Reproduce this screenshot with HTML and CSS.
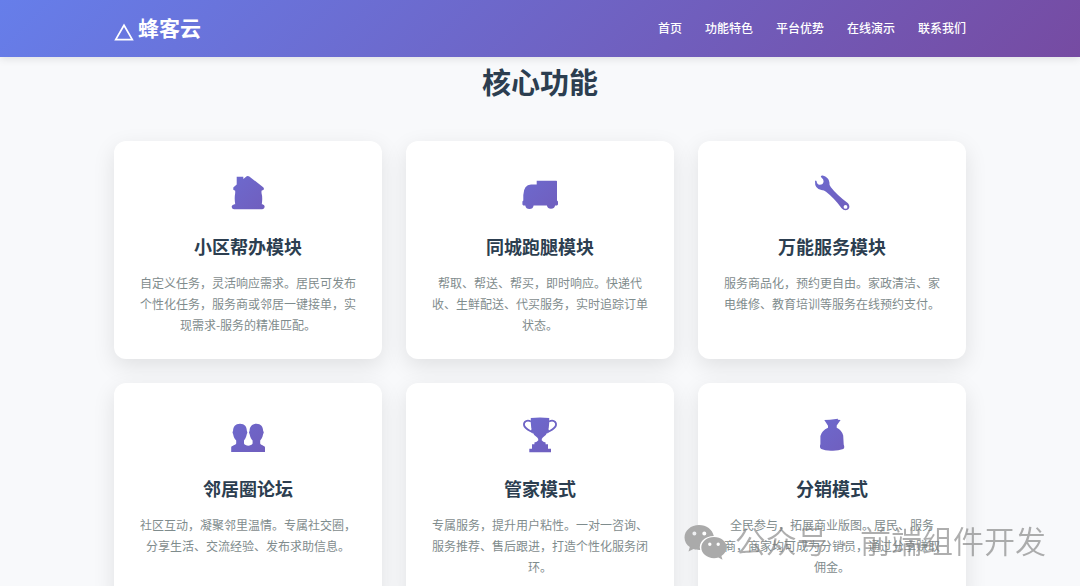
FILE: index.html
```html
<!DOCTYPE html>
<html lang="zh-CN">
<head>
  <meta charset="UTF-8" />
  <meta name="viewport" content="width=device-width, initial-scale=1" />
  <title>蜂客云</title>
  <link rel="stylesheet" href="styles.css">
</head>
<body>
  <svg class="defs" width="0" height="0" aria-hidden="true">
    <defs>
      <linearGradient id="iconFill" gradientUnits="userSpaceOnUse" x1="0" y1="0" x2="40" y2="40">
        <stop offset="0" stop-color="#6d6bd0" />
        <stop offset="1" stop-color="#705dbc" />
      </linearGradient>
    </defs>
  </svg>

  <header class="header">
    <div class="container header-inner">
      <a class="logo" href="#">
        <svg class="logo-icon" viewBox="0 0 20 18" aria-hidden="true"><path d="M10 2.3L18.3 16.6H1.7Z" /></svg>
        <span>蜂客云</span>
      </a>
      <nav class="nav">
        <a href="#home">首页</a>
        <a href="#features">功能特色</a>
        <a href="#advantages">平台优势</a>
        <a href="#demo">在线演示</a>
        <a href="#contact">联系我们</a>
      </nav>
    </div>
  </header>

  <main>
    <section class="features" id="features">
      <div class="container">
        <h2 class="section-title">核心功能</h2>
        <div class="feature-grid">
          <article class="feature-card">
            <div class="feature-icon">
              <svg viewBox="0 0 40 40" aria-hidden="true"><path d="M8.7 3.7H15.3V6L18.7 3.3Q20 2.5 21.3 3.5L35.2 14.2Q36.4 15.3 35.6 16.8L33.5 17.8V20Q34.8 24.5 33.8 31.2H34.5Q36.7 31.8 36.7 33.8Q36.5 36.2 34.3 36.2H6Q3.7 36.2 3.6 33.8Q3.7 31.8 6.4 31.2H7.2Q6.2 25.5 7.2 20V17.8L5.3 16.8V14.6L8.7 11.6Z" /></svg>
            </div>
            <h3>小区帮办模块</h3>
            <p>自定义任务，灵活响应需求。居民可发布个性化任务，服务商或邻居一键接单，实现需求-服务的精准匹配。</p>
          </article>
          <article class="feature-card">
            <div class="feature-icon">
              <svg viewBox="0 0 40 40" aria-hidden="true"><path d="M16.7 7.7H36.4L37 8.3V27.5L38 28.5V31.5L37 32.5H35.1A4.2 4.2 0 0 1 26.9 32.5H13.6A4.2 4.2 0 0 1 5.3 32.5H3.3L2.4 31.5V28.5L3.3 27.5V22Q3.8 11.4 11 11.4H16.7Z" /></svg>
            </div>
            <h3>同城跑腿模块</h3>
            <p>帮取、帮送、帮买，即时响应。快递代收、生鲜配送、代买服务，实时追踪订单状态。</p>
          </article>
          <article class="feature-card">
            <div class="feature-icon">
              <svg viewBox="0 0 40 40" aria-hidden="true"><path fill-rule="evenodd" d="M9 3Q9.6 2.2 10.8 2.5Q16.5 4 17.4 9.2Q17 12 18.9 14.2Q24.5 21.5 36 30.3Q38.8 34 36 36.5Q32.5 38.5 29.6 35.2Q22 25 14 18.8Q12.2 17.3 9.4 17Q2.6 15.7 3 8.2Q3.7 6.6 4.6 8.2Q5 11.5 7.5 11.7Q11.3 11.8 11.6 8.2Q11.6 6 9.4 4.5Q8.5 3.8 9 3ZM33.5 32A1.9 1.9 0 1 0 33.5 35.8A1.9 1.9 0 1 0 33.5 32Z" /></svg>
            </div>
            <h3>万能服务模块</h3>
            <p>服务商品化，预约更自由。家政清洁、家电维修、教育培训等服务在线预约支付。</p>
          </article>
          <article class="feature-card">
            <div class="feature-icon">
              <svg viewBox="0 0 40 40" aria-hidden="true"><path d="M12 8.7C16.8 8.7 18.8 12 18.8 15.5L19.4 17.5L18.7 19.5C18.2 22.5 16.8 24.5 16 25.5V28.5C16.5 30.3 18.5 30.2 20.3 30.8C22 30.2 24 30.3 24.6 28.5V25.5C23.5 24.5 22.2 22.5 21.7 19.5L21 17.5L21.6 15.5C21.7 12 23.8 8.7 28.4 8.7C33 8.7 35 12 35.1 15.5L35.8 17.5L35 19.5C34.7 22.5 33 24.5 32.2 25.5V28.5C33 30.5 37 30.5 37 32.5V37H3.2V32.5C3.2 30.5 7.2 30.5 8.2 28.5V25.5C7.2 24.5 5.6 22.5 5.2 19.5L4.5 17.5L5.1 15.5C5.2 12 7.2 8.7 12 8.7Z" /></svg>
            </div>
            <h3>邻居圈论坛</h3>
            <p>社区互动，凝聚邻里温情。专属社交圈，分享生活、交流经验、发布求助信息。</p>
          </article>
          <article class="feature-card">
            <div class="feature-icon">
              <svg viewBox="0 0 40 40" aria-hidden="true"><path d="M10.8 3Q20 1.8 29.2 3V8Q29 19.5 22.8 22.4Q21.5 23.5 21.7 25.3Q23 27.3 25.6 27.5V29.2H28V33.8H31V37.2H9.3V33.8H12V29.2H14.4V27.5Q17 27.3 18.3 25.3Q18.5 23.5 17.2 22.4Q11 19.5 10.8 8Z" /><path class="line" d="M11 6.5C7 4.5 3.5 6.5 4 10C4.5 13.5 8.5 15 12 17V14.5M29 6.5C33 4.5 36.5 6.5 36 10C35.5 13.5 31.5 15 28 17V14.5" /></svg>
            </div>
            <h3>管家模式</h3>
            <p>专属服务，提升用户粘性。一对一咨询、服务推荐、售后跟进，打造个性化服务闭环。</p>
          </article>
          <article class="feature-card">
            <div class="feature-icon">
              <svg viewBox="0 0 40 40" aria-hidden="true"><path d="M12.3 5L18 4.7L26 3.8L25.8 4.8L28.6 5L24.7 10.5V12.8Q29.5 14.8 31.2 20.5L31.7 29.5Q33 32.8 31.3 34Q26 36 20 35.8Q13 36 9.3 34Q7.2 32.8 8.4 29V21Q9.8 15.5 16 12.8V10.8Z" /></svg>
            </div>
            <h3>分销模式</h3>
            <p>全民参与，拓展商业版图。居民、服务商，商家均可成为分销员，通过分享赚取佣金。</p>
          </article>
        </div>
      </div>
    </section>
  </main>

  <div class="watermark">
    <svg class="watermark-icon" viewBox="0 0 44 36" aria-hidden="true">
      <path fill-rule="evenodd" d="M15 1C7 1 0.5 6.5 0.5 13.5C0.5 17.5 2.5 20.8 5.8 23L4.5 27.5L9.5 25C12 25.8 14 26 16.2 25.9C14.2 18.5 20.5 12 29.8 12C28.5 5.5 22.5 1 15 1ZM10.4 7.5A2 2 0 1 0 10.4 11.5A2 2 0 1 0 10.4 7.5ZM20.3 7.5A2 2 0 1 0 20.3 11.5A2 2 0 1 0 20.3 7.5Z" />
      <path fill-rule="evenodd" d="M30 13C23 13 17.3 17.7 17.3 23.6C17.3 29.5 23 34.2 30 34.2C31.5 34.2 33 34 34.4 33.5L38.5 35.7L37.4 32C40.5 30 42.7 27 42.7 23.6C42.7 17.7 37 13 30 13ZM25.8 18.5A1.7 1.7 0 1 0 25.8 21.9A1.7 1.7 0 1 0 25.8 18.5ZM34.2 18.5A1.7 1.7 0 1 0 34.2 21.9A1.7 1.7 0 1 0 34.2 18.5Z" />
    </svg>
    <div class="watermark-text">
      <span>公众号</span>
      <span>·</span>
      <span>前端组件开发</span>
    </div>
  </div>
</body>
</html>
```
FILE: styles.css
```css
:root {
  --primary: #667eea;
  --secondary: #764ba2;
  --page-bg: #f8f9fb;
  --text-main: #2c3e50;
  --text-muted: #7f8c8d;
  --radius: 12px;
}
* {
  box-sizing: border-box;
  margin: 0;
  padding: 0;
}
body {
  font-family: "Noto Sans CJK SC", sans-serif;
  background: var(--page-bg);
  color: var(--text-main);
}
.defs {
  position: absolute;
}
.container {
  max-width: 900px;
  margin: 0 auto;
  padding: 0 24px;
}
.header {
  position: sticky;
  top: 0;
  z-index: 10;
  background: linear-gradient(135deg, var(--primary) 0%, var(--secondary) 100%);
  box-shadow: 0 2px 8px rgba(0, 0, 0, 0.1);
}
.header-inner {
  display: flex;
  justify-content: space-between;
  align-items: center;
  padding-top: 11px;
  padding-bottom: 13px;
}
.logo {
  display: flex;
  align-items: center;
  gap: 4px;
  color: #fff;
  font-size: 21px;
  line-height: 33px;
  font-weight: 700;
  text-decoration: none;
}
.logo-icon {
  width: 20px;
  height: 18px;
  margin-top: 8px;
  fill: none;
  stroke: #fff;
  stroke-width: 1.7;
}
.nav {
  display: flex;
  gap: 23px;
}
.nav a {
  color: #fff;
  font-size: 12px;
  line-height: 20px;
  font-weight: 500;
  text-decoration: none;
}
.features {
  padding: 4px 0 48px;
}
.section-title {
  margin-bottom: 40px;
  font-size: 29px;
  line-height: 40px;
  font-weight: 700;
  text-align: center;
}
.feature-grid {
  display: grid;
  grid-template-columns: repeat(3, 1fr);
  gap: 24px;
}
.feature-card {
  padding: 24px;
  background: #fff;
  border-radius: var(--radius);
  box-shadow: 0 7px 22px rgba(0, 0, 0, 0.1);
  text-align: center;
}
.feature-icon {
  display: flex;
  justify-content: center;
  align-items: center;
  height: 56px;
  margin-bottom: 12px;
}
.feature-icon svg {
  width: 40px;
  height: 40px;
  fill: url(#iconFill);
}
.feature-icon .line {
  fill: none;
  stroke: #6e64c5;
  stroke-width: 1.8;
}
.feature-card h3 {
  margin-bottom: 13px;
  font-size: 18px;
  line-height: 26px;
  font-weight: 700;
}
.feature-card p {
  color: var(--text-muted);
  font-size: 12px;
  line-height: 21px;
}
.watermark {
  position: fixed;
  right: 34px;
  bottom: 20px;
  z-index: 20;
  display: flex;
  align-items: center;
  gap: 7px;
  color: rgba(120, 120, 120, 0.6);
  font-size: 31px;
  line-height: 46px;
  font-weight: 350;
  pointer-events: none;
}
.watermark-text {
  display: flex;
  gap: 11px;
  font-family: "Liberation Sans", "Noto Sans CJK SC", sans-serif;
}
.watermark-icon {
  width: 44px;
  height: 36px;
  margin-bottom: 3px;
  fill: #aaa;
}
@media (max-width: 760px) {
  .feature-grid {
    grid-template-columns: 1fr;
  }
  .header-inner {
    flex-wrap: wrap;
  }
}
```
